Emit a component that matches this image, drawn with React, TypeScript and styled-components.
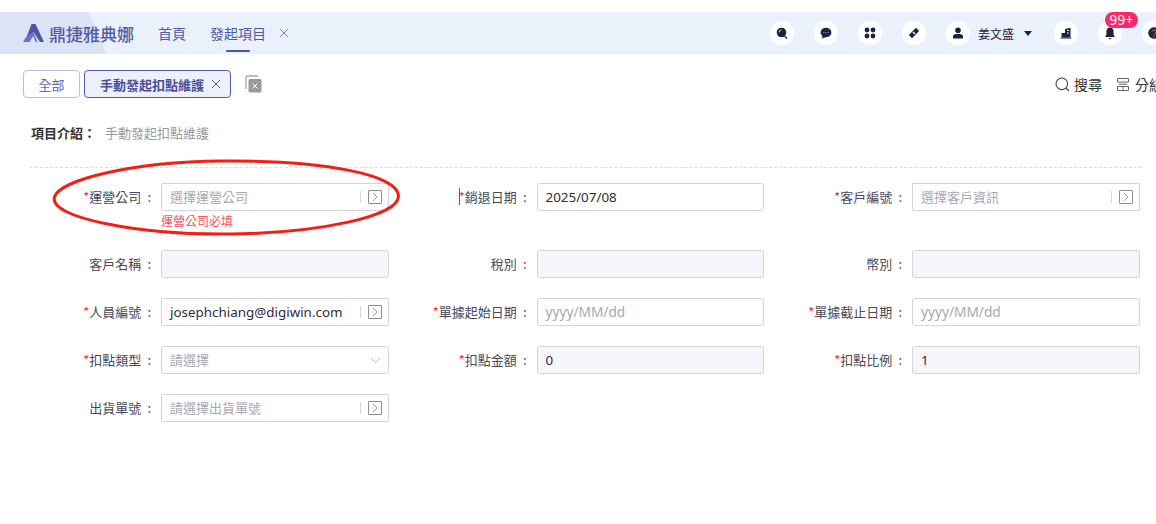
import styled, { createGlobalStyle } from 'styled-components';

const GlobalStyle = createGlobalStyle`
    html, body {
        margin: 0;
        padding: 0;
        width: 1156px;
        height: 524px;
        overflow: hidden;
        background: #fff;
        font-family: "Noto Sans CJK TC", "Noto Sans", sans-serif;
    }
`;

const Page = styled.div`
    position: relative;
    width: 1156px;
    height: 524px;
    padding-top: 12px;
    box-sizing: border-box;
    overflow: hidden;
`;

const Header = styled.header`
    position: relative;
    display: flex;
    align-items: center;
    height: 42px;
    background: #eaf1fb;
    padding-left: 23px;
    &::before {
        content: '';
        position: absolute;
        left: 0;
        top: 0;
        width: 106px;
        height: 42px;
        background: #dde3f7;
        clip-path: path('M0 0 H88 C95 12 101 28 106 42 H0 Z');
    }
`;

const Logo = styled.div`
    position: relative;
    display: flex;
    align-items: center;
    gap: 5px;
    width: 135px;
    font-size: 17px;
    font-weight: 500;
    color: #515ca6;
    white-space: nowrap;
`;

const NavItem = styled.div<{ $active?: boolean }>`
    position: relative;
    font-size: 14px;
    line-height: 20px;
    color: #4d58a5;
    margin-right: 24px;
    ${(p) =>
        p.$active &&
        `
        margin-right: 13px;
        &::after {
            content: '';
            position: absolute;
            left: 16px;
            bottom: -9px;
            width: 24px;
            height: 2px;
            border-radius: 1px;
            background: #4d58a5;
        }
    `}
`;

const NavClose = styled.div`
    display: flex;
    color: #7c84bb;
`;

const HeaderRight = styled.div`
    display: flex;
    align-items: center;
    margin-left: auto;
    margin-right: -10px;
    gap: 20px;
`;

const Round = styled.div`
    position: relative;
    display: flex;
    align-items: center;
    justify-content: center;
    width: 24px;
    height: 24px;
    border-radius: 50%;
    background: #fff;
    flex: none;
`;

const UserBox = styled.div`
    display: flex;
    align-items: center;
    margin-right: 2px;
`;

const UserName = styled.span`
    font-size: 12px;
    color: #1f2140;
    margin-left: 8px;
    margin-right: 10px;
    white-space: nowrap;
`;

const Caret = styled.span`
    width: 0;
    height: 0;
    border-left: 4px solid transparent;
    border-right: 4px solid transparent;
    border-top: 5px solid #1f2140;
`;

const Badge = styled.span`
    position: absolute;
    top: -9px;
    left: 7px;
    box-sizing: border-box;
    width: 33px;
    height: 16px;
    border-radius: 8px;
    background: #f52a6b;
    color: #fff;
    font-size: 14px;
    letter-spacing: 0.3px;
    line-height: 15px;
    text-align: center;
    white-space: nowrap;
`;

const TabBar = styled.div`
    display: flex;
    align-items: center;
    height: 28px;
    margin-top: 16px;
    padding-left: 23px;
`;

const Tab = styled.div<{ $active?: boolean }>`
    display: flex;
    align-items: center;
    box-sizing: border-box;
    height: 28px;
    margin-right: 4px;
    border-radius: 4px;
    font-size: 13px;
    border: 1px solid ${(p) => (p.$active ? '#4f5ab0' : '#b9bfdf')};
    background: ${(p) => (p.$active ? '#eef0fc' : '#fff')};
    color: ${(p) => (p.$active ? '#464f9c' : '#6169ad')};
    font-weight: ${(p) => (p.$active ? 700 : 400)};
    padding: ${(p) => (p.$active ? '0 9px 0 15px' : '0 14.5px')};
    gap: 7px;
`;

const CloseAll = styled.div`
    display: flex;
    margin-left: 10px;
`;

const TabTools = styled.div`
    display: flex;
    align-items: center;
    margin-left: auto;
    margin-right: -23px;
    font-size: 14px;
    color: #333;
    white-space: nowrap;
`;

const Tool = styled.div<{ $gap: number }>`
    display: flex;
    align-items: center;
    gap: ${(p) => p.$gap}px;
    margin-right: 15px;
    width: 47px;
    flex: none;
`;

const Intro = styled.div`
    display: flex;
    align-items: center;
    margin-top: 24px;
    padding-left: 31px;
    height: 20px;
    font-size: 13px;
`;

const IntroLabel = styled.span`
    font-weight: 700;
    color: #333;
    width: 74px;
`;

const IntroValue = styled.span`
    color: #999;
`;

const Divider = styled.div`
    margin: 25px 14px 0 30px;
    border-top: 1px dashed #dcdcdc;
`;

const Form = styled.div`
    display: grid;
    grid-template-columns: repeat(3, 375.5px);
    row-gap: 20px;
    margin: 15px 0 0 13px;
`;

const Field = styled.div`
    display: grid;
    grid-template-columns: 148px 227.5px;
    align-items: start;
`;

const Label = styled.label`
    display: flex;
    justify-content: flex-end;
    align-items: center;
    height: 28px;
    padding: 0 10px 2px 0;
    box-sizing: border-box;
    font-size: 13px;
    color: #4a4a55;
    white-space: nowrap;
`;

const Star = styled.span`
    color: #f5333f;
`;

const Colon = styled.span`
    margin-left: 6px;
`;

const Cursor = styled.span`
    width: 1px;
    height: 17px;
    background: #e8202a;
    margin-right: -1px;
`;

const Control = styled.div<{ $disabled?: boolean; $square?: boolean }>`
    display: flex;
    align-items: center;
    box-sizing: border-box;
    height: 28px;
    padding: 0 6px 0 8px;
    border: 1px solid #d4d4dc;
    border-radius: ${(p) => (p.$square ? '1px' : '3px')};
    background: ${(p) => (p.$disabled ? '#f5f5fa' : '#fff')};
    font-size: 13px;
`;

const Value = styled.span`
    flex: 1;
    padding-bottom: 1px;
    font-family: "Noto Sans", "Noto Sans CJK TC", sans-serif;
    font-size: 13.4px;
    color: #2c2c3a;
    white-space: nowrap;
`;

const Placeholder = styled.span<{ $latin?: boolean }>`
    flex: 1;
    padding-bottom: 2px;
    color: #a8a8b2;
    white-space: nowrap;
    ${(p) => p.$latin && 'font-family: "Noto Sans", sans-serif; font-size: 13.7px;'}
`;

const Sep = styled.span`
    width: 1px;
    height: 12px;
    background: #d8d8d8;
    margin-right: 7px;
`;

const OpenButton = styled.span`
    display: flex;
    align-items: center;
    justify-content: center;
    box-sizing: border-box;
    width: 14px;
    height: 14px;
    border: 1px solid #8e8e8e;
    border-radius: 1px;
    color: #8e8e8e;
`;

const SelectArrow = styled.span`
    display: flex;
    margin-right: 1px;
`;

const ErrorText = styled.div`
    font-size: 12px;
    line-height: 19px;
    color: #f2535b;
    white-space: nowrap;
`;

const Annotation = styled.svg`
    position: absolute;
    left: 50px;
    top: 156px;
    pointer-events: none;
`;

const Ink = '#1f2140';

const Cross = ({ size = 10, color = 'currentColor' }: { size?: number; color?: string }) => (
    <svg width={size} height={size} viewBox="0 0 10 10" fill="none" stroke={color} strokeWidth="1">
        <path d="M1 1 L9 9 M9 1 L1 9" />
    </svg>
);

const LogoMark = () => (
    <svg width="21" height="18" viewBox="0 0 21 18">
        <path d="M8.5 0 H12.5 L21 18 H17 L10.5 8 L3 14.5 Z" fill="#4d58a5" />
        <path d="M10.5 8 L14.5 18 H0 L3 13 Z" fill="#6a74b8" />
        <path d="M10.3 12 L12.6 18 H6.5 Z" fill="#dde3f7" />
    </svg>
);

const SearchFill = () => (
    <svg width="12" height="12" viewBox="0 0 12 12" fill={Ink}>
        <circle cx="5.5" cy="5.5" r="4.8" />
        <path d="M8.5 9 L11 11.5" stroke={Ink} strokeWidth="1.2" />
        <path d="M3 5.5 A2.5 2.5 0 0 1 5.5 3" stroke="#fff" strokeWidth="0.8" fill="none" />
    </svg>
);

const Chat = () => (
    <svg width="12" height="12" viewBox="0 0 12 12" fill={Ink}>
        <path d="M6 .8 C9.2 .8 11.4 3 11.4 5.6 C11.4 8.3 9.2 10.3 6 10.3 L1.6 11.4 L2.6 9.3 C1.4 8.4 .6 7.1 .6 5.6 C.6 3 2.8 .8 6 .8 Z" />
        <path d="M3.4 5.6 H8.6" stroke="#9a9aae" strokeWidth="1" strokeDasharray="1 1" />
    </svg>
);

const Apps = () => (
    <svg width="12" height="12" viewBox="0 0 12 12" fill={Ink}>
        <circle cx="3" cy="3" r="2.4" />
        <circle cx="9" cy="3" r="2.4" />
        <circle cx="3" cy="9" r="2.4" />
        <circle cx="9" cy="9" r="2.4" />
    </svg>
);

const Ticket = () => (
    <svg width="12" height="12" viewBox="0 0 12 12" fill={Ink}>
        <path d="M8 .8 L11.2 4 L4 11.2 L.8 8 Z" />
        <path d="M5 5 L7 7" stroke="#fff" strokeWidth="1.4" />
    </svg>
);

const User = () => (
    <svg width="12" height="12" viewBox="0 0 12 12" fill={Ink}>
        <circle cx="6" cy="3.2" r="2.8" />
        <path d="M1 11.5 V9.5 C1 8 2.5 7 4 7 H8 C9.5 7 11 8 11 9.5 V11.5 Z" />
    </svg>
);

const Building = () => (
    <svg width="12" height="12" viewBox="0 0 12 12" fill={Ink}>
        <path d="M1.5 6 H5 V2 L10.5 .8 V10.5 H1.5 Z" />
        <path d="M.5 11 H11.5" stroke={Ink} />
        <path d="M7 3.5 H8.8 M7 6 H8.8" stroke="#fff" />
    </svg>
);

const Bell = () => (
    <svg width="12" height="13" viewBox="0 0 12 13" fill={Ink}>
        <path d="M6 .5 C8.4 .5 9.6 2.4 9.6 4.6 V8 L11 10 H1 L2.4 8 V4.6 C2.4 2.4 3.6 .5 6 .5 Z" />
        <path d="M4.5 11 H7.5 L6 12.6 Z" />
    </svg>
);

const Help = () => (
    <svg width="12" height="12" viewBox="0 0 12 12">
        <circle cx="6" cy="6" r="5.8" fill={Ink} />
        <path d="M4.2 4.6 C4.3 2.6 7.8 2.6 7.8 4.6 C7.8 6 6 5.8 6 7.4" stroke="#f2527f" fill="none" />
        <circle cx="6" cy="9" r=".7" fill="#f2527f" />
    </svg>
);

const CloseCopies = () => (
    <svg width="17" height="18" viewBox="0 0 17 18">
        <path d="M1 14 V2.5 C1 1.6 1.6 1 2.5 1 H13" fill="none" stroke="#a8a8a8" strokeWidth="1.4" />
        <rect x="3.5" y="4" width="13" height="13.5" rx="1.5" fill="#9a9a9a" />
        <path d="M7.5 8.5 L12.5 13.5 M12.5 8.5 L7.5 13.5" stroke="#fff" strokeWidth="1" />
    </svg>
);

const SearchLine = () => (
    <svg width="15" height="15" viewBox="0 0 15 15" fill="none" stroke="#444" strokeWidth="1.1">
        <circle cx="6.8" cy="6.8" r="5.8" />
        <path d="M11 11 L14 14" />
    </svg>
);

const GroupIcon = () => (
    <svg width="12" height="13" viewBox="0 0 12 13" fill="none" stroke="#666" strokeWidth="1">
        <path d="M.5 .5 H11.5 V4 H.5 Z" />
        <path d="M2 6.2 H10" />
        <path d="M.5 8.5 H11.5 V12.5 H.5 Z M6 8.5 V12.5" />
    </svg>
);

const Chevron = () => (
    <svg width="8" height="10" viewBox="0 0 8 10" fill="none" stroke="currentColor" strokeWidth="0.9">
        <path d="M2 1 L6 5 L2 9" />
    </svg>
);

const ChevronDown = () => (
    <svg width="11" height="7" viewBox="0 0 11 7" fill="none" stroke="#bcbcc4" strokeWidth="1">
        <path d="M1 1 L5.5 5.5 L10 1" />
    </svg>
);

interface FieldDef {
    label: string;
    required?: boolean;
    cursor?: boolean;
    value?: string;
    placeholder?: string;
    latin?: boolean;
    disabled?: boolean;
    open?: boolean;
    select?: boolean;
    error?: string;
}

const fields: FieldDef[] = [
    { label: '運營公司', required: true, placeholder: '選擇運營公司', open: true, error: '運營公司必填' },
    { label: '銷退日期', required: true, cursor: true, value: '2025/07/08' },
    { label: '客戶編號', required: true, placeholder: '選擇客戶資訊', open: true },
    { label: '客戶名稱', disabled: true },
    { label: '稅別', disabled: true },
    { label: '幣別', disabled: true },
    { label: '人員編號', required: true, value: 'josephchiang@digiwin.com', open: true },
    { label: '單據起始日期', required: true, placeholder: 'yyyy/MM/dd', latin: true },
    { label: '單據截止日期', required: true, placeholder: 'yyyy/MM/dd', latin: true },
    { label: '扣點類型', required: true, placeholder: '請選擇', select: true },
    { label: '扣點金額', required: true, value: '0', disabled: true },
    { label: '扣點比例', required: true, value: '1', disabled: true },
    { label: '出貨單號', placeholder: '請選擇出貨單號', open: true },
];

const App = () => (
    <>
        <GlobalStyle />
        <Page>
            <Header>
                <Logo>
                    <LogoMark />
                    鼎捷雅典娜
                </Logo>
                <NavItem>首頁</NavItem>
                <NavItem $active>發起項目</NavItem>
                <NavClose>
                    <Cross />
                </NavClose>
                <HeaderRight>
                    <Round><SearchFill /></Round>
                    <Round><Chat /></Round>
                    <Round><Apps /></Round>
                    <Round><Ticket /></Round>
                    <UserBox>
                        <Round><User /></Round>
                        <UserName>姜文盛</UserName>
                        <Caret />
                    </UserBox>
                    <Round><Building /></Round>
                    <Round>
                        <Bell />
                        <Badge>99+</Badge>
                    </Round>
                    <Round><Help /></Round>
                </HeaderRight>
            </Header>
            <TabBar>
                <Tab>全部</Tab>
                <Tab $active>
                    手動發起扣點維護
                    <Cross color="#666" />
                </Tab>
                <CloseAll>
                    <CloseCopies />
                </CloseAll>
                <TabTools>
                    <Tool $gap={4}>
                        <SearchLine />
                        搜尋
                    </Tool>
                    <Tool $gap={6}>
                        <GroupIcon />
                        分組
                    </Tool>
                </TabTools>
            </TabBar>
            <Intro>
                <IntroLabel>項目介紹：</IntroLabel>
                <IntroValue>手動發起扣點維護</IntroValue>
            </Intro>
            <Divider />
            <Form>
                {fields.map((f) => (
                    <Field key={f.label}>
                        <Label>
                            {f.cursor && <Cursor />}
                            {f.required && <Star>*</Star>}
                            {f.label}
                            <Colon>:</Colon>
                        </Label>
                        <div>
                            <Control $disabled={f.disabled} $square={f.open}>
                                {f.value && <Value>{f.value}</Value>}
                                {f.placeholder && <Placeholder $latin={f.latin}>{f.placeholder}</Placeholder>}
                                {f.open && (
                                    <>
                                        <Sep />
                                        <OpenButton>
                                            <Chevron />
                                        </OpenButton>
                                    </>
                                )}
                                {f.select && (
                                    <SelectArrow>
                                        <ChevronDown />
                                    </SelectArrow>
                                )}
                            </Control>
                            {f.error && <ErrorText>{f.error}</ErrorText>}
                        </div>
                    </Field>
                ))}
            </Form>
            <Annotation width="354" height="84" viewBox="0 0 354 84" fill="none">
                <path
                    d="M4.5 41 C10 24 80 6 172 5 C270 4 348 18 348.5 40 C349 60 270 77 180 78 C90 79 -2 62 4.5 41 Z"
                    stroke="#f41e14"
                    strokeWidth="3"
                />
            </Annotation>
        </Page>
    </>
);

export default App;
